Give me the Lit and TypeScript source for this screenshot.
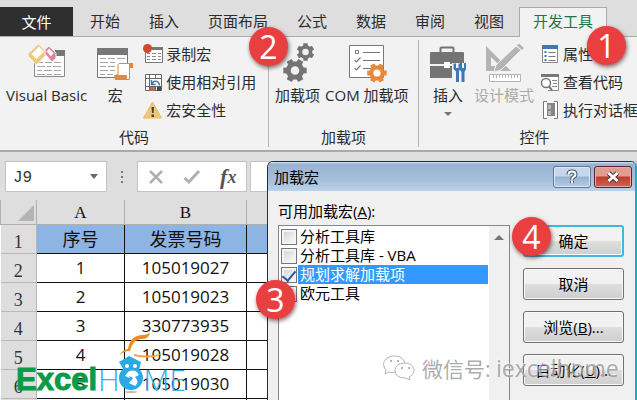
import { LitElement, html, css } from "lit";
import { customElement, property, state } from "lit/decorators.js";
import { classMap } from "lit/directives/class-map.js";

const gearPath = (cx: number, cy: number, r: number, turn = 0) => {
  const pts: string[] = [];
  const teeth = 6;
  const step = (Math.PI * 2) / teeth;
  for (let i = 0; i < teeth; i++) {
    const a = i * step + turn;
    for (const [da, k] of [[-0.34, 0.76], [-0.24, 1], [0.24, 1], [0.34, 0.76]]) {
      pts.push(`${(cx + Math.cos(a + da) * r * k).toFixed(2)} ${(cy + Math.sin(a + da) * r * k).toFixed(2)}`);
    }
  }
  const h = r * 0.36;
  return `M${pts.join("L")}Z M${cx - h} ${cy}a${h} ${h} 0 1 0 ${2 * h} 0a${h} ${h} 0 1 0 ${-2 * h} 0Z`;
};

const icons = {
  vb: html`<svg width="40" height="40" viewBox="0 0 40 40">
    <path d="M7.500 8.500H37.500V33.500H7.500Z" fill="#fff" stroke="#8a8a8a"/>
    <path d="M28 7H38V13H28Z" fill="#777"/>
    <path d="M10 19.500h6M18 19.500h7M27 19.500h7M10 23.500h8M20 23.500h4M26 23.500h8M10 27.500h5M17 27.500h8M27 27.500h7M10 31.500h8M20 31.500h5M27 31.500h7" stroke="#a6a6a6"/>
    <path d="M11.500 1L19 8.500V12L9.500 22L1 13V10.500Z" fill="#ecca7c" stroke="#f2f2f2"/>
    <path d="M12 3.500L17 8.500L9.500 16L4.500 11Z" fill="#fffdf5"/>
    <path d="M22 3L29 10V15L25 19L18 11V6.500Z" fill="#e0829a" stroke="#f2f2f2"/>
    <path d="M22 5.500L26.500 10L24 13.500L19.500 8.500Z" fill="#fff4f5"/></svg>`,
  macro: html`<svg width="40" height="40" viewBox="0 0 40 40">
    <path d="M2.500 5.500H32.500V34.500H2.500Z" fill="#fff" stroke="#777"/>
    <path d="M2 5H33V12H2Z" fill="#777"/>
    <path d="M5 15.500h6M13 15.500h7M22 15.500h8M5 19.500h8M15 19.500h5M5 23.500h6M13 23.500h7M5 27.500h8M15 27.500h5M5 31.500h5M12 31.500h6" stroke="#a6a6a6"/>
    <path d="M24 20.500H37.500V24H34.500V36.500H21V32H23V22Z" fill="#fff" stroke="#d98a45"/>
    <path d="M34 20H38V25H34ZM19 32H32V37H20Z" fill="#e0893f"/></svg>`,
  gears: html`<svg width="40" height="40" viewBox="0 0 40 40">
    <path d=${gearPath(27.5, 9, 9, 0.52)} fill="#747474" fill-rule="evenodd"/>
    <path d=${gearPath(17, 27.5, 12, 0)} fill="#747474" fill-rule="evenodd"/></svg>`,
  com: html`<svg width="40" height="40" viewBox="0 0 40 40">
    <path d="M2.500 2.500H36.500V34.500H2.500Z" fill="#fff" stroke="#777"/>
    <path d="M8.500 7.500h3v3h-3z" fill="none" stroke="#777"/>
    <path d="M16 9.500H33M16 17.500H33M16 25.500H24M7.500 17l2 2 4-4.500M7.500 25l2 2 4-4.500" fill="none" stroke="#777" stroke-width="1.200"/>
    <path d=${gearPath(30, 30, 10, 0)} fill="#e8883a" fill-rule="evenodd"/></svg>`,
  toolbox: html`<svg width="40" height="40" viewBox="0 0 40 40">
    <path d="M12.500 11V5.500Q12.500 4.500 13.500 4.500H24.500Q25.500 4.500 25.500 5.500V11" fill="none" stroke="#747474" stroke-width="2"/>
    <path d="M2 10Q2 9 3 9H35Q36 9 36 10V21H2ZM2 23H36V35H2Z" fill="#747474"/>
    <path d="M16 19h6v6h-6z" fill="#fff"/>
    <path d="M24 20H39V40H24Z" fill="#f2f2f2"/>
    <path d="M25.500 20.500V26L28 28.500V39H31V28.500L32 26V20.500H30.500V25H28V20.500Z" fill="#3e77b5"/>
    <path d="M32 20h6v6l-1.500 3v10h-3v-10L32 27Z" fill="#3e77b5"/><path d="M34 20h2v5h-2z" fill="#f2f2f2"/></svg>`,
  design: html`<svg width="40" height="40" viewBox="0 0 40 40">
    <path d="M2 3L27 28H2ZM7 14V23H16Z" fill="#b4b4b4" fill-rule="evenodd"/>
    <path d="M37 7L17 27L10 29L12 22L32 3Z" fill="#b4b4b4" stroke="#f2f2f2"/>
    <path d="M34 1.500L39 6" stroke="#b4b4b4" stroke-width="3"/>
    <path d="M5.500 31.500H36.500V38.500H5.500Z" fill="#fff" stroke="#b4b4b4"/>
    <path d="M9.500 32v3M12.500 32v3M15.500 32v3M18.500 32v3M21.500 32v3M24.500 32v3M27.500 32v3M30.500 32v3M33.500 32v3" stroke="#b4b4b4"/></svg>`,
  record: html`<svg width="20" height="20" viewBox="0 0 20 20">
    <path d="M2.500 3.500H19.500V18.500H2.500Z" fill="#fff" stroke="#777"/><path d="M9 3H20V6H9Z" fill="#777"/>
    <path d="M4 9.500h3M9 9.500h4M15 9.500h3M4 12.500h3M9 12.500h4M15 12.500h3M4 15.500h3M9 15.500h4M15 15.500h3" stroke="#8a8a8a"/>
    <circle cx="4.500" cy="4.500" r="4.500" fill="#d0492c"/></svg>`,
  relative: html`<svg width="20" height="20" viewBox="0 0 20 20">
    <path d="M2.500 2.500H18.500V18.500H2.500ZM6.500 2V18M12.500 2V6M2 6.500H18M2 14.500H18M12.500 14V18" fill="#fff" stroke="#666"/>
    <path d="M7 7H18V14H7Z" fill="#fff"/><path d="M7 15h5v4H7z" fill="#c9694b"/><path d="M14 15h4v4h-4z" fill="#444"/>
    <path d="M16.500 13.500Q16 8.500 11 9.500L9 11.500M8.500 8V12.500H12.500" fill="none" stroke="#3e77b5" stroke-width="1.500"/></svg>`,
  warning: html`<svg width="20" height="20" viewBox="0 0 20 20">
    <path d="M9.500 2L18.500 18H.5Z" fill="#efc877" stroke="#e6bd69" stroke-linejoin="round"/>
    <path d="M8.500 7h2.500l-.5 6h-1.500zM8.500 14.500h2.500v2.500h-2.500z" fill="#4a4030"/></svg>`,
  props: html`<svg width="20" height="20" viewBox="0 0 20 20">
    <path d="M2.500 2.500H17.500V18.500H2.500Z" fill="#fff" stroke="#888"/><path d="M2 1H18V5H2Z" fill="#3e77b5"/>
    <path d="M4.500 8h2M4.500 12h2M4.500 16h2" stroke="#3e77b5" stroke-width="2"/><path d="M8.500 8.500h7M8.500 12.500h7M8.500 16.500h7" stroke="#777"/></svg>`,
  code: html`<svg width="20" height="20" viewBox="0 0 20 20">
    <path d="M2 2.500H18.500V18.500H8" fill="#fff" stroke="#888"/><path d="M1 2H19V5H1Z" fill="#777"/>
    <path d="M12 8.500h5M13 11.500h4M12 14.500h5" stroke="#8a8a8a"/>
    <circle cx="6" cy="11" r="4.500" fill="#fff" stroke="#777" stroke-width="1.500"/><path d="M9 14.500L12 18" stroke="#777" stroke-width="2"/></svg>`,
  run: html`<svg width="20" height="20" viewBox="0 0 20 20">
    <path d="M7 1.500H3.500V18.500H7M14 1.500H17.500V18.500H14" fill="#fff" stroke="#777"/>
    <path d="M7 3H15V16H7Z" fill="#858585"/><path d="M8 5h3v4H8zM8 11h3v4H8z" fill="#b8b8b8"/></svg>`,
};

@customElement("step-badge")
class StepBadge extends LitElement {
  static styles = css`
    :host {
      display: flex; align-items: center; justify-content: center;
      width: 39px; height: 39px; border-radius: 50%;
      background: #e93f41; color: #fff; font: 32px/1 "Open Sans", sans-serif;
      box-shadow: 1px 2px 4px rgba(60, 0, 0, .6);
    }`;
  render() { return html`<slot></slot>`; }
}

@customElement("ribbon-button")
class RibbonButton extends LitElement {
  @property() label = "";
  @property() icon: keyof typeof icons = "vb";
  @property({ type: Boolean }) small = false;
  @property({ type: Boolean }) menu = false;
  @property({ type: Boolean }) disabled = false;
  static styles = css`
    :host { display: block; flex: none; }
    button {
      display: flex; flex-direction: column; align-items: center; gap: 2px;
      border: 0; padding: 0; background: none; color: #2b2b2b; white-space: nowrap;
      font: 15px/20px "Open Sans", "Noto Sans CJK SC", sans-serif;
    }
    button:disabled { color: #ababab; }
    .small { flex-direction: row; gap: 3px; height: 28px; }
    .arrow { margin-top: 5px; border: 4px solid transparent; border-top-color: #777; }
    svg { display: block; }`;
  render() {
    return html`<button class=${classMap({ small: this.small })} ?disabled=${this.disabled}>
      ${icons[this.icon]}<span>${this.label}</span>${this.menu ? html`<span class="arrow"></span>` : ""}
    </button>`;
  }
}

@customElement("addins-dialog")
class AddinsDialog extends LitElement {
  @state() items = [
    { name: "分析工具库", on: false },
    { name: "分析工具库 - VBA", on: false },
    { name: "规划求解加载项", on: true },
    { name: "欧元工具", on: false },
  ];
  static styles = css`
    :host {
      display: flex; flex-direction: column; box-sizing: border-box; overflow: hidden;
      border: 1px solid #1d2f3a; border-right: 2px solid #18aebb; border-bottom: 0;
      border-radius: 6px 6px 0 0; background: #f0f0f0; color: #000;
      font: 15px/19px "Open Sans", "Noto Sans CJK SC", sans-serif;
    }
    * { box-sizing: border-box; }
    .title {
      display: flex; gap: 3px; height: 29px; padding: 4px 3px 0 6px; flex: none;
      background: linear-gradient(#dce8f5 0, #98b3d2 2px, #a4bedb 60%, #bbd2ea);
    }
    h2 { flex: 1; margin: 2px 0 0; font: inherit; }
    .cap {
      display: flex; align-items: center; justify-content: center;
      width: 38px; height: 22px; padding: 0; border: 1px solid #5f7895; border-radius: 3px;
      background: linear-gradient(#c5d7eb 45%, #97b1cf 50%, #b5cce5); box-shadow: inset 0 0 0 1px #dce8f5;
    }
    .close { border-color: #5b2624; background: linear-gradient(#e19d91 45%, #bd3b2a 50%, #cc6552); box-shadow: inset 0 0 0 1px #e8aaa1; }
    .body { display: flex; flex: 1; gap: 13px; padding: 0 11px 0 10px; min-height: 0; }
    .left { flex: 1; display: flex; flex-direction: column; padding-top: 11px; }
    .caption { height: 23px; }
    .list { flex: 1; display: flex; border: 1px solid #828790; border-bottom: 0; background: #fff; }
    ul { flex: 1; margin: 0; padding: 1px 0 0 2px; list-style: none; }
    label { display: flex; align-items: center; height: 19px; gap: 1px; }
    label span { flex: 1; padding-left: 2px; white-space: nowrap; }
    .on span { background: #3399ff; color: #fff; }
    input {
      appearance: none; margin: 0; width: 16px; height: 16px; border: 1px solid #777;
      background: linear-gradient(135deg, #cfcfcf, #fff); box-shadow: inset 0 0 0 2px #f4f4f4;
      display: grid; place-items: center;
    }
    input:checked::after {
      content: ""; width: 6px; height: 11px; border: solid #2f5597; border-width: 0 2px 2px 0;
      transform: rotate(40deg);
    }
    .scroll { width: 20px; margin-left: 1px; padding-top: 9px; background: #f0f0f0; display: flex; justify-content: center; }
    .up { width: 0; height: 0; border: 5px solid transparent; border-top: 0; border-bottom: 5px solid #777; }
    .actions { display: flex; flex-direction: column; gap: 11px; width: 101px; padding-top: 34px; }
    .actions button {
      height: 32px; flex: none; border: 1px solid #707070; border-radius: 3px; padding: 0; font: inherit; color: #000;
      background: linear-gradient(#f2f2f2 48%, #dddddd 52%, #cfcfcf); box-shadow: inset 0 0 0 1px #fafafa;
    }
    .actions .default { border: 2px solid #43b5df; }`;
  toggle(i: number) {
    this.items = this.items.map((it, n) => (n === i ? { ...it, on: !it.on } : it));
  }
  render() {
    return html`
      <div class="title"><h2>加载宏</h2>
        <button class="cap" aria-label="帮助"><svg width="14" height="16" viewBox="0 0 14 16">
          <path d="M3.500 5.500Q3.500 2.500 7 2.500T10.500 5.500Q10.500 7 8.500 8Q7 9 7 10.500M7 12V14" fill="none" stroke="#40536b" stroke-width="4"/>
          <path d="M3.500 5.500Q3.500 2.500 7 2.500T10.500 5.500Q10.500 7 8.500 8Q7 9 7 10.500M7 12V14" fill="none" stroke="#fff" stroke-width="2"/></svg></button>
        <button class="cap close" aria-label="关闭"><svg width="16" height="14" viewBox="0 0 16 14">
          <path d="M3.500 3L12.500 11M12.500 3L3.500 11" stroke="#4b3b45" stroke-width="5"/>
          <path d="M3.500 3L12.500 11M12.500 3L3.500 11" stroke="#fff" stroke-width="3"/></svg></button>
      </div>
      <div class="body">
        <div class="left">
          <div class="caption" id="cap">可用加载宏(<u>A</u>):</div>
          <div class="list"><ul aria-labelledby="cap">
            ${this.items.map((it, i) => html`<li><label class=${classMap({ on: it.on })}>
              <input type="checkbox" .checked=${it.on} @change=${() => this.toggle(i)}><span>${it.name}</span></label></li>`)}
          </ul><div class="scroll"><div class="up"></div></div></div>
        </div>
        <div class="actions">
          <button class="default">确定</button><button>取消</button>
          <button>浏览(<u>B</u>)...</button><button>自动化(<u>U</u>)...</button>
        </div>
      </div>`;
  }
}

@customElement("app-root")
class AppRoot extends LitElement {
  tabs = ["开始", "插入", "页面布局", "公式", "数据", "审阅", "视图", "开发工具"];
  rows = [["1", "105019027"], ["2", "105019023"], ["3", "330773935"], ["4", "105019028"], ["5", "105019030"]];
  static styles = css`
    :host {
      display: block; position: relative; height: 100vh; overflow: hidden; background: #dedede; color: #2b2b2b;
      font: 15px/20px "Open Sans", "Noto Sans CJK SC", sans-serif;
    }
    * { box-sizing: border-box; }
    button { font: inherit; color: inherit; }
    .tabs { display: flex; gap: 1px; height: 37px; padding-top: 7px; border-bottom: 1px solid #ababab; background: #dedede; }
    .tabs button { flex: none; height: 29px; padding: 0 14px 2px; border: 0; background: none; white-space: nowrap; }
    .tabs .file { width: 73px; margin-right: 2px; padding-bottom: 0; background: #2f2f2f; color: #fff; }
    .tabs .active { height: 30px; padding: 0 13px 4px; border: 1px solid #ababab; border-bottom: 0; background: #f2f2f2; color: #217346; }
    .ribbon { display: flex; height: 115px; padding-top: 3px; border-bottom: 2px solid #a9a9a9; background: #f2f2f2; overflow: hidden; }
    .group { flex: none; display: flex; flex-direction: column; height: 107px; border-right: 1px solid #b4b4b4; }
    .group h3 { margin: 0; text-align: center; font: inherit; }
    .tools { display: flex; height: 88px; padding-left: 6px; }
    .big { padding-top: 3px; }
    .code { width: 269px; }
    .code .tools { gap: 8px; }
    .addins { width: 150px; }
    .addins .tools { gap: 5px; }
    .controls { width: 232px; }
    .controls .tools { gap: 6px; padding-left: 9px; }
    .formula { display: flex; align-items: center; height: 48px; padding: 9px 0 8px; gap: 3px; }
    .name { display: flex; align-items: center; width: 102px; height: 31px; margin-left: 5px; border: 1px solid #c3c3c3; background: #fff; padding-right: 8px; }
    .name input { flex: 1; min-width: 0; border: 0; padding: 3px 0 0 7px; font: 16px/20px "Liberation Mono", monospace; color: #333; background: none; }
    .drop { width: 0; height: 0; border: 4px solid transparent; border-top: 5px solid #666; border-bottom: 0; }
    .dots { width: 24px; display: flex; justify-content: center; }
    .fx { display: flex; align-items: center; justify-content: space-around; width: 110px; height: 31px; border: 1px solid #c3c3c3; background: #fff; }
    .fx button { display: flex; padding: 0; border: 0; background: none; }
    .fx .fn { font: italic bold 22px/24px "Liberation Serif", serif; color: #555; }
    .fn small { font-size: 18px; }
    .bar { flex: 1; min-width: 0; height: 31px; border: 1px solid #c3c3c3; background: #fff; }
    table { width: 100%; table-layout: fixed; border-collapse: collapse; background: #fff; font-size: 17px; color: #111; }
    .c0 { width: 36px; } .c1 { width: 88px; } .c2 { width: 122px; }
    td, th { height: 29px; padding: 0; text-align: center; font-weight: 400; border: 1px solid #111; }
    thead th { height: 24px; padding-top: 3px; background: #dedede; border-color: #b0b0b0; border-top: 0; font: 17px/20px "Liberation Serif", serif; }
    tbody th { padding-top: 7px; background: #dedede; border-color: #b8b8b8; border-left: 0; font: 18px/20px "Liberation Serif", serif; color: #333; }
    .head td { background: #8db4e2; font-size: 18px; }
    .corner svg { display: block; margin-left: 17px; }
    addins-dialog { position: absolute; left: 267px; right: 0; top: 161px; bottom: 0; }
    step-badge { position: absolute; }
    .s1 { left: 587px; top: 26px; } .s2 { left: 249px; top: 27px; }
    .s3 { left: 256px; top: 280px; } .s4 { left: 512px; top: 217px; }
    .wechat {
      position: absolute; left: 382px; top: 354px; display: flex; align-items: center; gap: 6px; white-space: nowrap;
      font-size: 21px; line-height: 28px; color: rgba(150, 150, 150, .8); text-shadow: -1px -1px 0 rgba(255, 255, 255, .6);
    }
    .id { font-size: 23px; }
    .logo { position: absolute; left: 16px; top: 332px; display: flex; align-items: flex-end; font-size: 30px; line-height: 34px; }
    .logo span { margin-bottom: -3px; }
    .excel { font-size: 31px; font-family: "Liberation Sans", sans-serif; font-weight: 700; color: #0b9a48; -webkit-text-stroke: 1px #0b9a48; }
    .home { font-family: "Open Sans", sans-serif; font-weight: 300; color: #35b0ea; }
    .h { margin-left: 1px; }
    .owl { display: block; margin: 0 -19px 0 -3px; }`;
  btn(icon: string, label: string, o: { small?: boolean; menu?: boolean; disabled?: boolean } = {}) {
    return html`<ribbon-button class=${classMap({ big: !o.small })} icon=${icon} label=${label}
      ?small=${!!o.small} ?menu=${!!o.menu} ?disabled=${!!o.disabled}></ribbon-button>`;
  }
  render() {
    const s = { small: true };
    return html`
      <nav class="tabs"><button class="file">文件</button>
        ${this.tabs.map((t) => html`<button class=${classMap({ active: t === "开发工具" })}>${t}</button>`)}
      </nav>
      <section class="ribbon">
        <div class="group code"><div class="tools">
          ${this.btn("vb", "Visual Basic")}${this.btn("macro", "宏")}
          <div>${this.btn("record", "录制宏", s)}${this.btn("relative", "使用相对引用", s)}${this.btn("warning", "宏安全性", s)}</div>
        </div><h3>代码</h3></div>
        <div class="group addins"><div class="tools">
          ${this.btn("gears", "加载项")}${this.btn("com", "COM 加载项")}
        </div><h3>加载项</h3></div>
        <div class="group controls"><div class="tools">
          ${this.btn("toolbox", "插入", { menu: true })}${this.btn("design", "设计模式", { disabled: true })}
          <div>${this.btn("props", "属性", s)}${this.btn("code", "查看代码", s)}${this.btn("run", "执行对话框", s)}</div>
        </div><h3>控件</h3></div>
      </section>
      <div class="formula">
        <div class="name"><input aria-label="名称框" value="J9"><span class="drop"></span></div>
        <div class="dots"><svg width="4" height="14"><path d="M1 1h2v2H1zM1 6h2v2H1zM1 11h2v2H1z" fill="#777"/></svg></div>
        <div class="fx">
          <button aria-label="取消"><svg width="16" height="16"><path d="M2 2L14 14M14 2L2 14" stroke="#b0b0b0" stroke-width="2.500"/></svg></button>
          <button aria-label="输入"><svg width="18" height="16"><path d="M1.500 9L6 13L16 2" fill="none" stroke="#b0b0b0" stroke-width="3"/></svg></button>
          <button class="fn" aria-label="插入函数">f<small>x</small></button>
        </div>
        <input class="bar" aria-label="编辑栏">
      </div>
      <table>
        <colgroup><col class="c0"><col class="c1"><col class="c2"><col></colgroup>
        <thead><tr><th class="corner"><svg width="16" height="16"><path d="M16 0V16H0Z" fill="#b4b4b4"/></svg></th><th>A</th><th>B</th><th></th></tr></thead>
        <tbody>
          <tr class="head"><th>1</th><td>序号</td><td>发票号码</td><td></td></tr>
          ${this.rows.map((r, i) => html`<tr><th>${i + 2}</th><td>${r[0]}</td><td>${r[1]}</td><td></td></tr>`)}
          <tr><th></th><td></td><td></td><td></td></tr>
        </tbody>
      </table>
      <div class="logo">
        <span class="excel">Excel</span><span class="home h">H</span>
        <svg class="owl" width="46" height="62" viewBox="0 0 46 62">
          <path d="M2 24Q6 17 11 17Q13 3 26 3Q31 3 33 0Q32 7 26 7Q16 6 13 19Q6 19 2 24Z" fill="#f08c1e"/>
          <path d="M17 22Q28 25 45 22Q35 28 17 24Z" fill="#f5a040"/>
          <path d="M2 30L12 24L24 30L22 38H7Z" fill="#2aa9e6"/>
          <circle cx="14" cy="46" r="12" fill="#2aa9e6"/>
          <circle cx="10" cy="34" r="2" fill="#fff"/><circle cx="18" cy="34" r="2" fill="#fff"/>
          <path d="M11 40Q18 36 22 43L18 45Q23 50 18 54L12 51L15 47L8 44Z" fill="#fff"/>
          <path d="M12 44l4 2-2 3z" fill="#2aa9e6"/><ellipse cx="14" cy="60" rx="6" ry="1" fill="#bbb"/>
        </svg><span class="home">ME</span>
      </div>
      <addins-dialog role="dialog" aria-label="加载宏"></addins-dialog>
      <div class="wechat"><svg width="34" height="28" viewBox="0 0 34 28" fill="none" stroke="#b4b4b4">
        <path d="M14 17Q10 18 7 17L3 19L4 15Q-1 9 4 4Q10 -1 18 2Q22 4 23 8"/>
        <path d="M23 8Q14 8 13 15Q13 23 23 23L28 25L27 22Q33 19 32 14Q30 8 23 8Z" fill="#fff"/>
        <path d="M8 6h2M15 6h2M19 13h2M26 13h2" stroke-width="2"/></svg>
        <span>微信号: <span class="id">iexcelhome</span></span></div>
      <step-badge class="s1">1</step-badge><step-badge class="s2">2</step-badge>
      <step-badge class="s3">3</step-badge><step-badge class="s4">4</step-badge>`;
  }
}
